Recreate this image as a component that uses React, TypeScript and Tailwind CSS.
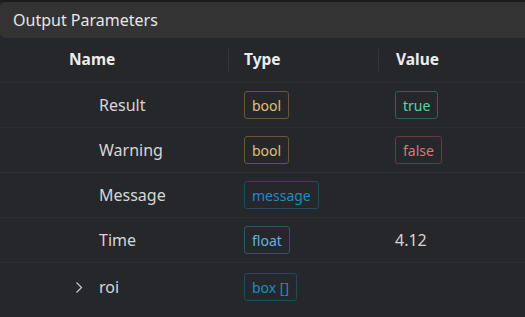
import React from "react";

type Badge = { text: string; cls: string };
type Row = { name: string; type: Badge; value?: Badge | string; expandable?: boolean };

const boolB = "border-[#6a5733] text-[#e3bf7a]";
const msgB = "border-[#1c4b63] text-[#1d8cc0]";
const floatB = "border-[#2d566d] text-[#62b3de]";

const rows: Row[] = [
  { name: "Result", type: { text: "bool", cls: boolB }, value: { text: "true", cls: "border-[#2b6450] text-[#5ed3a5]" } },
  { name: "Warning", type: { text: "bool", cls: boolB }, value: { text: "false", cls: "border-[#6a3a3e] text-[#dc757d]" } },
  { name: "Message", type: { text: "message", cls: msgB } },
  { name: "Time", type: { text: "float", cls: floatB }, value: "4.12" },
  { name: "roi", type: { text: "box []", cls: msgB }, expandable: true },
];

function Pill({ b }: { b: Badge }) {
  return (
    <span className={`inline-flex h-[28px] items-center rounded-[3px] border px-[7px] text-[14px] ${b.cls}`}>
      {b.text}
    </span>
  );
}

export default function App() {
  return (
    <div
      className="h-[317px] w-[525px] overflow-hidden bg-[#26272b] text-[#d6d6d6]"
      style={{ fontFamily: '"Noto Sans", "Open Sans", sans-serif' }}
    >
      <div className="border-t-2 border-[#1c1c1e] bg-[#26272b]">
        <div className="flex h-[36px] items-center rounded-l-[6px] bg-[#333333] pl-[13px] text-[16px] text-[#e6e6e6]">
          Output Parameters
        </div>
      </div>
      <div className="grid h-[44px] grid-cols-[228px_150px_1fr] items-center text-[15.5px] font-bold text-[#ececec]">
        <div className="pl-[69px]">Name</div>
        <div className="flex h-[22px] items-center border-l border-[#35363a] pl-[15px]">Type</div>
        <div className="flex h-[22px] items-center border-l border-[#35363a] pl-[17px]">Value</div>
      </div>
      <div className="border-t border-[#2c2d31]">
        {rows.map((r, i) => (
          <div
            key={r.name}
            className={`grid grid-cols-[228px_150px_1fr] items-center text-[16px] ${i < rows.length - 1 ? "h-[45px] border-b border-[#2c2d31]" : "h-[50px] pb-[2px]"}`}
          >
            <div className="flex items-center">
              <div className="flex w-[99px] justify-end pr-[16px]">
                {r.expandable && (
                  <svg width="8" height="13" viewBox="0 0 8 13" fill="none">
                    <path d="M1.5 1.5 L6.5 6.5 L1.5 11.5" stroke="#c8c8c8" strokeWidth="1.2" />
                  </svg>
                )}
              </div>
              <span>{r.name}</span>
            </div>
            <div className="pl-[16px]">
              <Pill b={r.type} />
            </div>
            <div className="pl-[17px]">
              {typeof r.value === "string" ? <span>{r.value}</span> : r.value ? <Pill b={r.value} /> : null}
            </div>
          </div>
        ))}
      </div>
    </div>
  );
}
